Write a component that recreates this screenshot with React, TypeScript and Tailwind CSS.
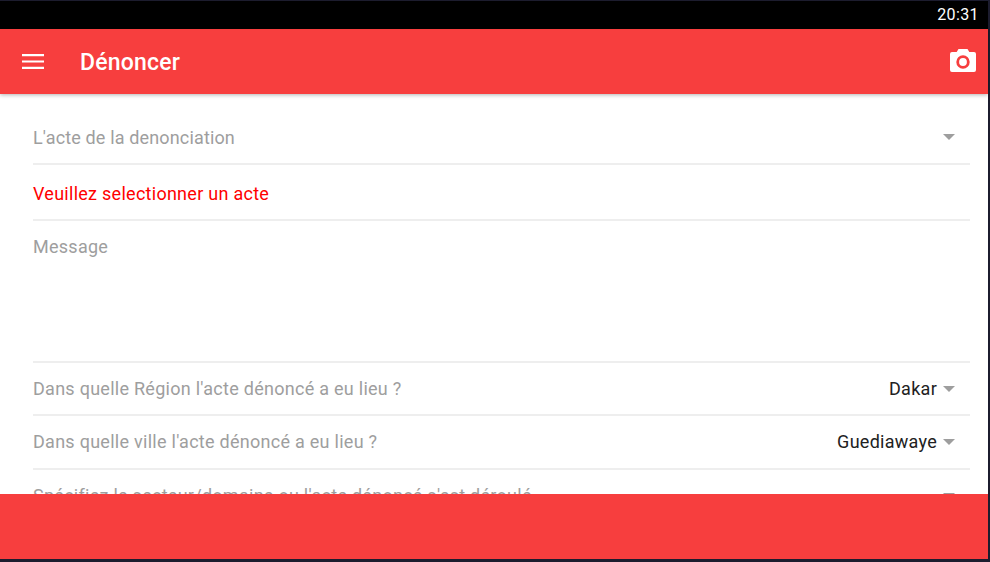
import React from "react";

function Caret({ className = "" }: { className?: string }) {
  return (
    <svg width="12" height="6" viewBox="0 0 12 6" className={className}>
      <path d="M0 0h12L6 6z" fill="#9e9e9e" />
    </svg>
  );
}

function SelectRow({ label, value, height }: { label: string; value?: string; height: string }) {
  return (
    <div className={`flex shrink-0 items-center justify-between border-b-2 border-[#eeeeee] pr-[15px] ${height}`}>
      <span className="text-[#9e9e9e]">{label}</span>
      <div className="flex items-center gap-[6px]">
        {value && <span className="text-[#212121]">{value}</span>}
        <Caret />
      </div>
    </div>
  );
}

export default function App() {
  return (
    <div className="flex h-[562px] w-[990px] flex-col overflow-hidden bg-[#1c1c2e] pt-px pr-[2px] pb-[3px] font-['Roboto',sans-serif] text-[18px] tracking-[0.27px]">
      <div className="flex h-[28px] shrink-0 items-center justify-end bg-black pr-[9px] text-[16px] tracking-[0.4px] text-white">
        20:31
      </div>

      <header className="z-10 flex h-[65px] shrink-0 items-center justify-between bg-[#f73e3e] pr-[12px] pl-[22px] shadow-[0_1px_4px_rgba(0,0,0,0.3)]">
        <div className="flex items-center gap-[36px]">
          <svg width="22" height="15" viewBox="0 0 22 15">
            <path d="M0 0h22v2.2H0zM0 6.400h22v2.200H0zM0 12.800h22V15H0z" fill="#fff" />
          </svg>
          <h1 className="pt-[2px] text-[23px] leading-none font-medium tracking-[0.2px] text-white">Dénoncer</h1>
        </div>
        <svg width="26" height="23" viewBox="0 0 26 23" className="mb-[3px]">
          <path
            d="M8.5 0h9l1.8 3H24a2 2 0 0 1 2 2v16a2 2 0 0 1-2 2H2a2 2 0 0 1-2-2V5a2 2 0 0 1 2-2h4.700z"
            fill="#fff"
          />
          <circle cx="13" cy="13" r="5.300" fill="none" stroke="#f73e3e" strokeWidth="2.800" />
        </svg>
      </header>

      <main className="flex min-h-0 flex-1 flex-col overflow-hidden bg-white pr-[18px] pl-[33px]">
        <SelectRow label="L'acte de la denonciation" height="h-[71px] pt-[17px] tracking-[0.15px]" />
        <div className="flex h-[56px] shrink-0 items-center border-b-2 border-[#eeeeee] pt-[2px] text-[#ff0000]">
          Veuillez selectionner un acte
        </div>
        <div className="h-[142px] shrink-0 border-b-2 border-[#eeeeee] pt-[14px] leading-[24px] text-[#9e9e9e]">
          Message
        </div>
        <SelectRow label="Dans quelle Région l'acte dénoncé a eu lieu ?" value="Dakar" height="h-[53px]" />
        <SelectRow label="Dans quelle ville l'acte dénoncé a eu lieu ?" value="Guediawaye" height="h-[54px] pb-px" />
        <SelectRow label="Spécifiez le secteur/domaine ou l'acte dénoncé s'est déroulé" height="h-[53px]" />
      </main>

      <footer className="h-[65px] shrink-0 bg-[#f73e3e]" />
    </div>
  );
}
